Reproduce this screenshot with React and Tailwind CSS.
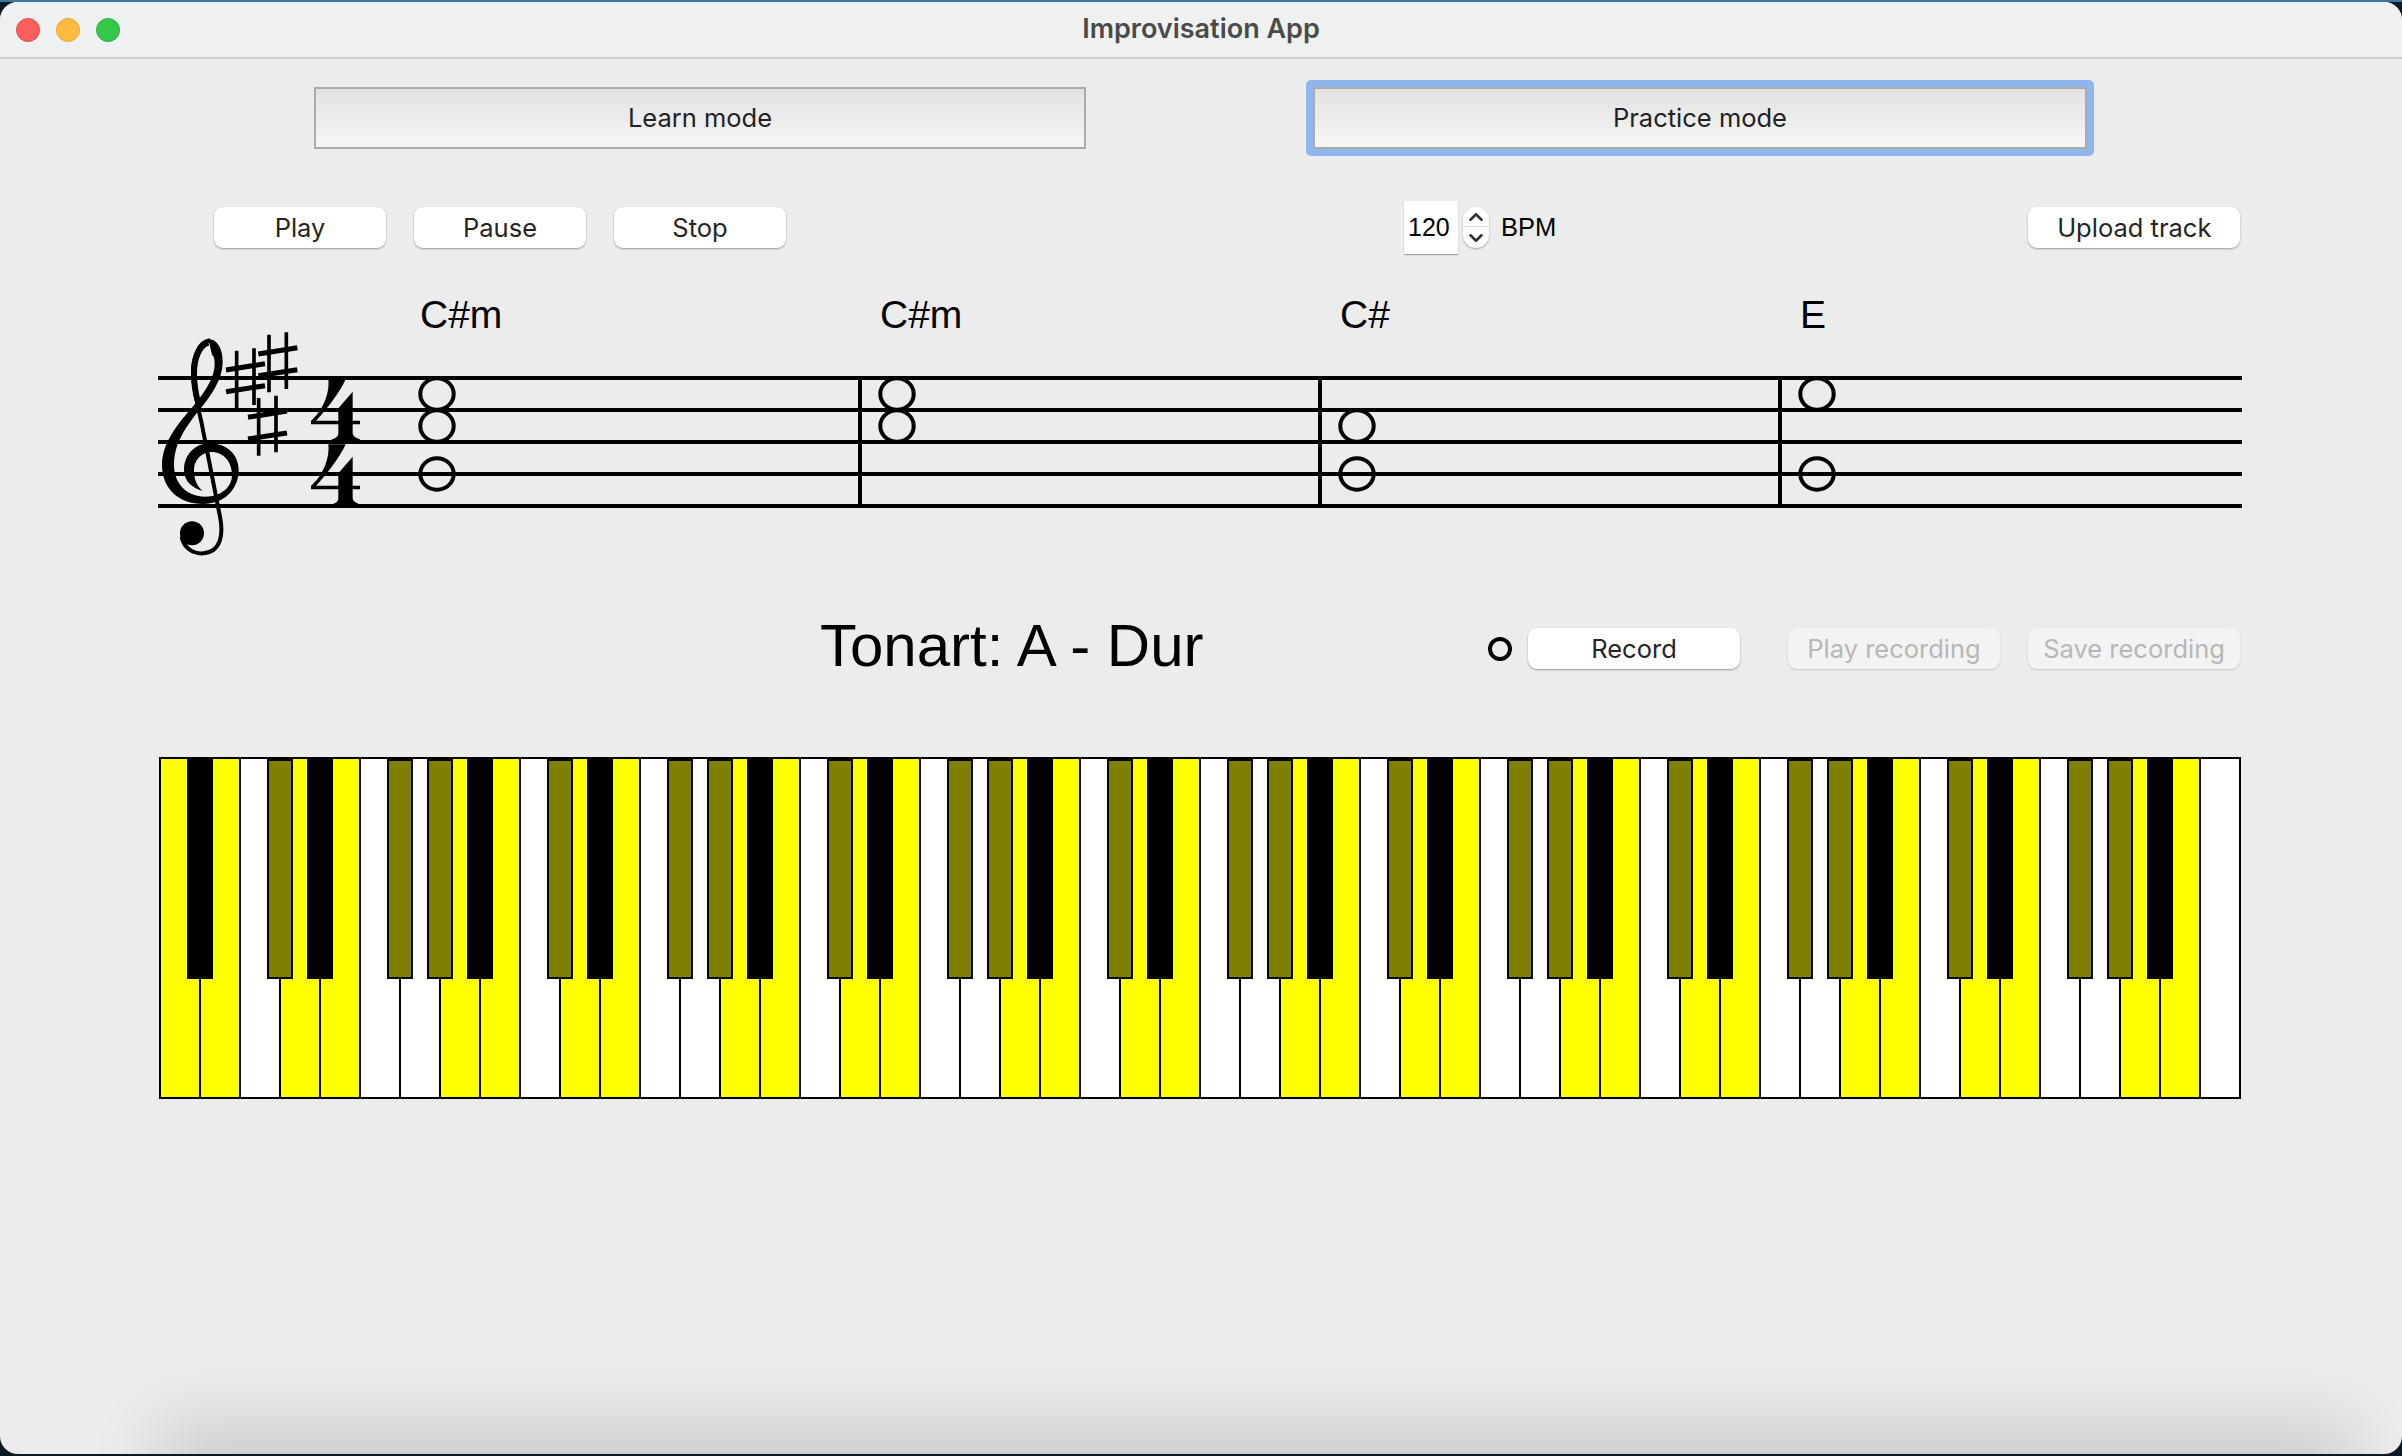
import { ChevronUp, ChevronDown } from "lucide-react";

const sans = "font-['Inter','Liberation_Sans',sans-serif]";
const helv = "font-['Liberation_Sans',Arial,sans-serif]";

// 52 white keys starting on A; the A major scale is highlighted
const NOTES = ["A", "B", "C", "D", "E", "F", "G"];
const SCALE_WHITE = ["A", "B", "D", "E"];
const SCALE_BLACK = ["C", "F", "G"];
const HAS_SHARP = ["A", "C", "D", "F", "G"];
const KEYS = Array.from({ length: 52 }, (_, i) => NOTES[i % 7]);

const STAFF_LINES = [378, 410, 442, 474, 506];
const BAR_LINES = [860, 1320, 1780];
const STAFF_NOTES = [
  [437, 394], [437, 426], [437, 474],
  [897, 394], [897, 426],
  [1357, 426], [1357, 474],
  [1817, 394], [1817, 474],
];
const CHORDS = ["C#m", "C#m", "C#", "E"];

function PushButton({ label, className = "", disabled = false }) {
  return (
    <button
      disabled={disabled}
      className={`h-[41px] rounded-[9px] text-[25.5px] leading-none ${sans} ${
        disabled
          ? "bg-[#f3f3f3] text-[#b7b7b7] shadow-[0_1px_2px_rgba(0,0,0,0.16)]"
          : "bg-white text-[#252525] shadow-[0_1px_2px_rgba(0,0,0,0.35)]"
      } ${className}`}
    >
      {label}
    </button>
  );
}

function ModeButton({ label, className = "" }) {
  return (
    <button
      className={`h-[62px] border-2 border-[#ababab] bg-gradient-to-b from-[#e2e2e2] to-[#f6f6f6] text-[25.5px] leading-none text-[#222] ${sans} ${className}`}
    >
      {label}
    </button>
  );
}

function Sharp({ x, y }) {
  return (
    <g fill="none" stroke="#000">
      <path d={`M${x + 32} ${y + 9}V${y + 182}M${x + 84} ${y + 2}V${y + 172}`} strokeWidth="11" />
      <path
        d={`M${x} ${y + 67}L${x + 117} ${y + 48}M${x} ${y + 132}L${x + 117} ${y + 114}`}
        strokeWidth="15"
      />
    </g>
  );
}

const FOUR =
  "M565 298L617 298C600 335 560 390 528 422L595 422L595 385L638 335L638 422L660 422L660 433L638 433L638 458C638 470 650 474 660 478L660 482L575 482L575 478C588 474 595 470 595 458L595 433L513 433L513 423C545 395 570 345 565 298Z";

function Staff() {
  return (
    <svg className="ml-[140px] block" width="2120" height="240" viewBox="140 331 2120 240">
      {STAFF_LINES.map((y) => (
        <rect key={y} x="158" y={y - 2} width="2084" height="4" fill="#000" />
      ))}
      {BAR_LINES.map((x) => (
        <rect key={x} x={x - 2} y="378" width="4" height="128" fill="#000" />
      ))}
      {STAFF_NOTES.map(([x, y]) => (
        <ellipse key={`${x}-${y}`} cx={x} cy={y} rx="16.7" ry="15.7" fill="none" stroke="#000" strokeWidth="4" />
      ))}
      <g transform="translate(140 280) scale(0.33333)">
        <path
          fill="#000"
          d="M188 632C160 626 132 605 132 570C132 525 165 490 208 490C262 490 296 525 296 570C296 630 250 672 190 672C115 672 66 625 66 555C66 480 125 420 168 368C198 332 224 290 224 252C224 238 222 228 216 224L205 178C232 176 250 210 248 250C246 300 215 345 180 388C140 436 102 490 102 555C102 610 140 650 195 650C245 650 276 620 276 585C276 545 250 516 215 516C185 516 162 540 162 570C162 600 172 620 188 632Z"
        />
        <path
          fill="none"
          stroke="#000"
          strokeWidth="12"
          d="M210 181C175 185 158 235 159 280C160 330 172 370 185 430L240 710C250 760 245 815 190 820C155 822 130 800 125 770"
        />
        <path fill="none" stroke="#000" strokeWidth="18" d="M205 188C178 195 162 235 162 280C162 310 166 335 172 360" />
        <circle cx="156" cy="760" r="36" fill="#000" />
        <Sharp x={258} y={203} />
        <Sharp x={324} y={345} />
        <Sharp x={355} y={155} />
        <path fill="#000" d={FOUR} />
        <path fill="#000" d={FOUR} transform="translate(0 195)" />
      </g>
    </svg>
  );
}

function Piano() {
  return (
    <div className="ml-[159px] flex">
      {KEYS.map((note, i) => (
        <div
          key={i}
          className={`relative -ml-[2px] h-[342px] w-[42px] shrink-0 border-2 border-black first:ml-0 ${
            SCALE_WHITE.includes(note) ? "bg-[#ffff00]" : "bg-white"
          }`}
        >
          {HAS_SHARP.includes(note) && i < 51 && (
            <div
              className={`absolute left-[26px] top-0 z-10 h-[220px] w-[26px] border-2 border-black ${
                SCALE_BLACK.includes(note) ? "bg-[#808000]" : "bg-black"
              }`}
            />
          )}
        </div>
      ))}
    </div>
  );
}

export default function App() {
  return (
    <div className="h-[1456px] w-[2402px] overflow-hidden border-t-2 border-[#3f769c] bg-[#0c1a24]">
      <div className="relative h-[1452px] overflow-hidden rounded-[18px] bg-[#ececec]">
        {/* title bar */}
        <div className="relative flex h-[57px] items-center justify-center border-b-2 border-[#cfcfcf] bg-[#eff1f1]">
          <div className="absolute left-[16px] top-[16px] flex gap-[16px]">
            <span className="h-[24px] w-[24px] rounded-full border border-[#e5484d] bg-[#ff5f5c]" />
            <span className="h-[24px] w-[24px] rounded-full border border-[#e8a33a] bg-[#ffbb3e]" />
            <span className="h-[24px] w-[24px] rounded-full border border-[#2bb03f] bg-[#33c84a]" />
          </div>
          <span className={`text-[27px] font-semibold text-[#4a4a4a] ${sans}`}>Improvisation App</span>
        </div>

        {/* mode switch */}
        <div className="mt-[28px] flex items-center pl-[314px]">
          <ModeButton label="Learn mode" className="w-[772px]" />
          <div className="-my-[7px] ml-[220px] flex rounded-[5px] bg-[#8fb6ee] p-[7px]">
            <ModeButton label="Practice mode" className="w-[774px]" />
          </div>
        </div>

        {/* transport */}
        <div className="mt-[52px] flex h-[53px] items-center pl-[214px]">
          <PushButton label="Play" className="w-[172px]" />
          <PushButton label="Pause" className="ml-[28px] w-[172px]" />
          <PushButton label="Stop" className="ml-[28px] w-[172px]" />
          <div className={`ml-[618px] flex h-[53px] w-[54px] items-center bg-white pl-[4px] text-[25px] text-black shadow-[0_1px_1px_rgba(0,0,0,0.3)] ${helv}`}>
            120
          </div>
          <div className="ml-[5px] flex h-[41px] w-[26px] flex-col items-center rounded-[13px] bg-white shadow-[0_1px_2px_rgba(0,0,0,0.3)]">
            <div className="flex h-[20px] w-full items-center justify-center border-b border-[#d8d8d8]">
              <ChevronUp size={22} strokeWidth={2.8} color="#333" />
            </div>
            <div className="flex h-[21px] items-center justify-center">
              <ChevronDown size={22} strokeWidth={2.8} color="#333" />
            </div>
          </div>
          <span className={`ml-[12px] text-[25.5px] text-black ${helv}`}>BPM</span>
          <PushButton label="Upload track" className="ml-[472px] w-[212px]" />
        </div>

        {/* chord names */}
        <div className={`mt-[45px] flex h-[32px] pl-[420px] text-[39px] leading-[32px] text-black ${helv}`}>
          {CHORDS.map((chord, i) => (
            <span key={i} className="w-[460px]">
              {chord}
            </span>
          ))}
        </div>

        <Staff />

        {/* key and recording */}
        <div className="mt-[57px] flex h-[41px] items-center pl-[820px]">
          <span className={`-mt-[6px] w-[668px] whitespace-nowrap text-[60px] leading-[41px] text-black ${helv}`}>
            Tonart: A - Dur
          </span>
          <span className="h-[24px] w-[24px] rounded-full border-4 border-black" />
          <PushButton label="Record" className="ml-[16px] w-[212px]" />
          <PushButton label="Play recording" disabled className="ml-[48px] w-[212px]" />
          <PushButton label="Save recording" disabled className="ml-[28px] w-[212px]" />
        </div>

        <div className="mt-[88px]">
          <Piano />
        </div>

        {/* shadow of the window underneath */}
        <div className="absolute -bottom-[30px] left-[190px] right-[80px] h-[30px] shadow-[0_0_70px_30px_rgba(0,0,0,0.14)]" />
      </div>
    </div>
  );
}
